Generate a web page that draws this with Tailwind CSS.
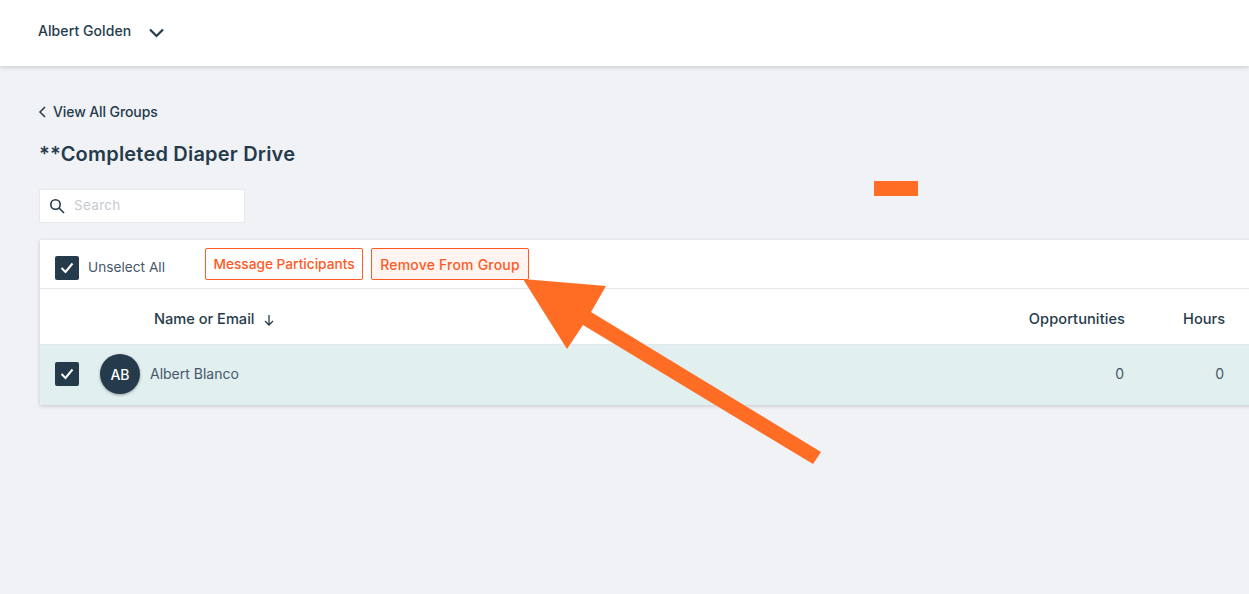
<!DOCTYPE html>
<html>
<head>
<meta charset="utf-8">
<script src="https://cdn.jsdelivr.net/npm/@tailwindcss/browser@4"></script>
</head>
<body class="bg-[#f0f2f6] font-['Inter',sans-serif] text-[#253b4b]">
<div class="relative w-[1249px] h-[594px] overflow-hidden">
  <header class="h-[66px] bg-white shadow-[0_1px_5px_rgba(0,0,0,0.18)] flex items-center pl-[39px]">
    <span class="text-[14px] font-medium leading-none -mt-[4px] -ml-[1px] tracking-[0.08px]">Albert Golden</span>
    <svg class="ml-[18px] -mt-[1px]" width="15" height="10" viewBox="0 0 15 10" fill="none" stroke="#253b4b" stroke-width="2.2"><path d="M1 1.5l6.5 6.5 6.5-6.5"/></svg>
  </header>
  <main class="pl-[40px]">
    <a class="flex items-center mt-[38px] h-[16px] text-[14px] font-medium leading-none">
      <svg class="-ml-[2px]" width="8" height="12" viewBox="0 0 8 12" fill="none" stroke="#253b4b" stroke-width="1.5"><path d="M7 1L2 6l5 5"/></svg>
      <span class="ml-[7px] -tracking-[0.1px]">View All Groups</span>
    </a>
    <h1 class="mt-[24px] -ml-[1px] h-[20px] text-[20px] font-semibold leading-[20px] whitespace-nowrap tracking-[0.2px]">**Completed Diaper Drive</h1>
    <div class="mt-[25px] -ml-[1px] w-[206px] h-[34px] bg-white border border-[#e6e8ec] rounded-[2px] flex items-center pl-[9px]">
      <svg width="16" height="16" viewBox="0 0 16 16" fill="none" stroke="#253b4b" stroke-width="1.6"><circle cx="6.5" cy="6.5" r="4.7"/><path d="M10 10l5 5"/></svg>
      <span class="ml-[9px] -mt-[1px] text-[13.5px] text-[#c5cad0] tracking-[0.3px]">Search</span>
    </div>
    <section class="mt-[17px] w-[1220px] bg-white shadow-[0_1px_4px_rgba(0,0,0,0.18)]">
      <div class="h-[49px] border-b border-[#e5e7ea] flex items-center pl-[15px]">
        <span class="w-[24px] h-[24px] mt-[8px] bg-[#253b4b] rounded-[2px] flex items-center justify-center">
          <svg width="14" height="12" viewBox="0 0 14 12" fill="none" stroke="#fff" stroke-width="2"><path d="M1.5 6l4 4 7-8.5"/></svg>
        </span>
        <span class="ml-[9px] mt-[7px] text-[13.7px] text-[#47586a]">Unselect All</span>
        <button class="ml-[40px] -mt-[1px] pt-[1px] h-[32px] w-[158px] border border-[#ff5a24] rounded-[2px] text-[13.7px] font-medium text-[#ff5a24] whitespace-nowrap">Message Participants</button>
        <button class="ml-[8px] -mt-[1px] pt-[1px] h-[32px] w-[158px] border border-[#ff5a24] rounded-[2px] bg-[#fff4f0] text-[14px] font-medium text-[#ff5a24] whitespace-nowrap tracking-[0.2px]">Remove From Group</button>
      </div>
      <div class="h-[55px] flex items-center text-[14.6px] font-medium pt-[7px]">
        <span class="ml-[114px] flex items-center">Name or Email
          <svg class="ml-[8px]" width="12" height="12" viewBox="0 0 12 12" fill="none" stroke="#253b4b" stroke-width="1.3"><path d="M6 1v10M2 7l4 4 4-4"/></svg>
        </span>
        <span class="ml-auto tracking-[0.08px]">Opportunities</span>
        <span class="ml-[58px] mr-[35px]">Hours</span>
      </div>
      <div class="h-[61px] bg-[#e1efef] border-t border-[#e3e9ea] flex items-center pl-[15px] pb-[2px] text-[14px] text-[#47586a]">
        <span class="w-[24px] h-[24px] bg-[#253b4b] rounded-[2px] flex items-center justify-center">
          <svg width="14" height="12" viewBox="0 0 14 12" fill="none" stroke="#fff" stroke-width="2"><path d="M1.5 6l4 4 7-8.5"/></svg>
        </span>
        <span class="ml-[21px] w-[40px] h-[40px] rounded-full bg-[#253b4b] text-white text-[14px] font-medium flex items-center justify-center shadow-[0_1px_3px_rgba(0,0,0,0.35)]">AB</span>
        <span class="ml-[10px] -mt-[2px]">Albert Blanco</span>
        <span class="ml-auto -mt-[2px]">0</span>
        <span class="ml-[91px] mr-[36px] -mt-[2px]">0</span>
      </div>
    </section>
  </main>
  <div class="absolute left-[874px] top-[181px] w-[44px] h-[15px] bg-[#ff6d24]"></div>
  <svg class="absolute left-0 top-0" width="1249" height="594" viewBox="0 0 1249 594" fill="#ff6d24">
    <polygon points="523,279 606,286 591,312 821,452 813,464 583,325 567,349"/>
  </svg>
</div>
</body>
</html>
